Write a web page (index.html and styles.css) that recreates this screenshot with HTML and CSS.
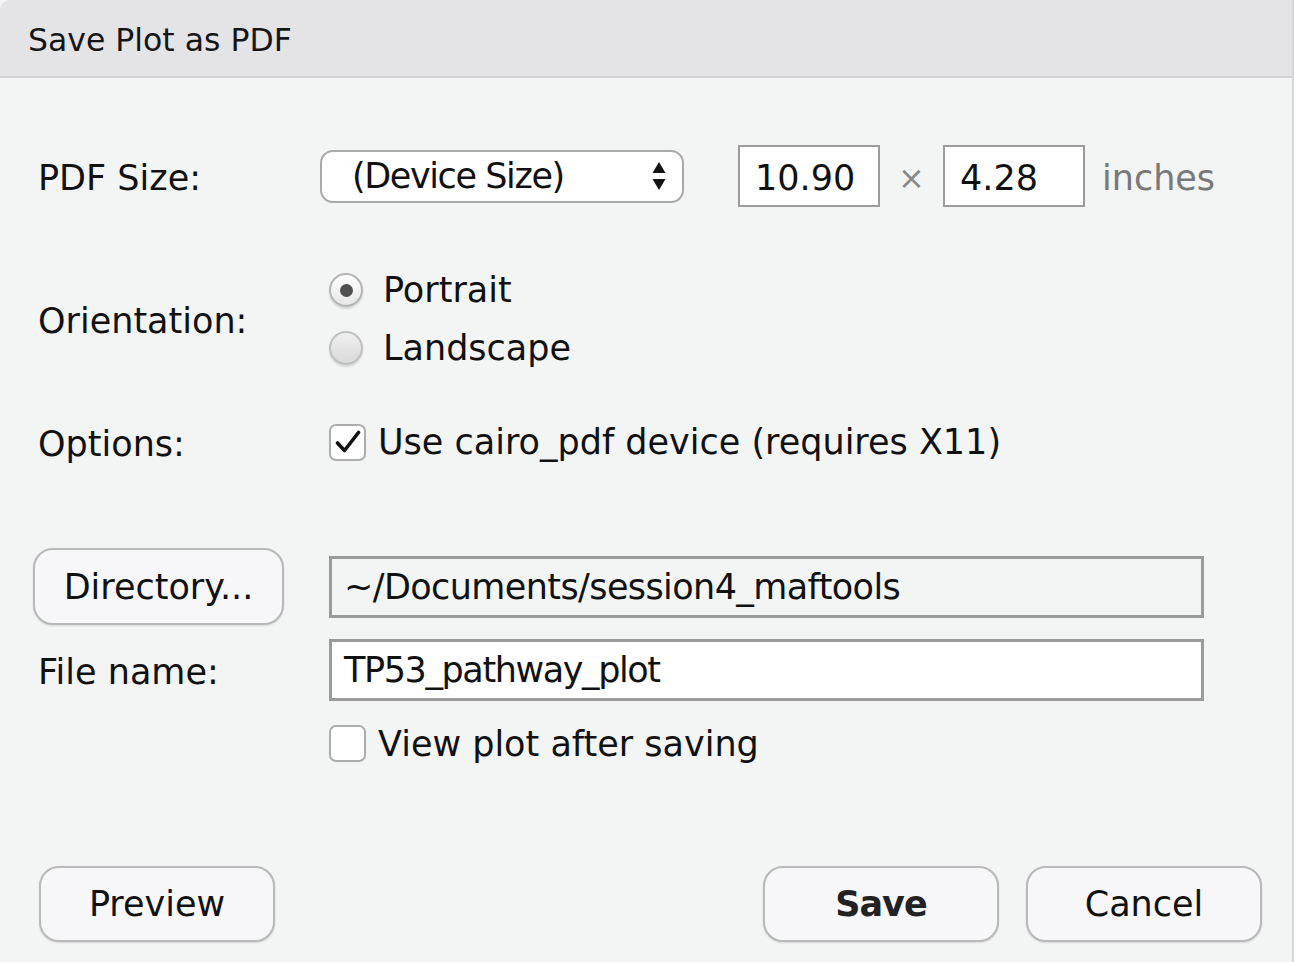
FILE: index.html
```html
<!DOCTYPE html>
<html>
<head>
<meta charset="utf-8">
<title>Save Plot as PDF</title>
<link rel="stylesheet" href="styles.css">
</head>
<body>
<div class="dialog">
  <div class="titlebar">Save Plot as PDF</div>
  <div class="content">
    <div class="row row-size">
      <div class="label">PDF Size:</div>
      <div class="select">
        <span class="select-text">(Device Size)</span>
        <svg class="arrows" width="14" height="30" viewBox="0 0 14 30"><path d="M7 1 L13.5 12 L0.5 12 Z M7 29 L13.5 18 L0.5 18 Z" fill="#111"/></svg>
      </div>
      <div class="input num">10.90</div>
      <span class="times">×</span>
      <div class="input num">4.28</div>
      <span class="unit">inches</span>
    </div>

    <div class="row row-orient">
      <div class="label">Orientation:</div>
      <div class="radios">
        <div class="radio-row"><span class="radio checked"></span><span class="opt">Portrait</span></div>
        <div class="radio-row"><span class="radio"></span><span class="opt">Landscape</span></div>
      </div>
    </div>

    <div class="row row-options">
      <div class="label">Options:</div>
      <span class="check on"><svg width="26" height="24" viewBox="0 0 26 24"><path d="M2.5 13 L9.5 20.5 L23.5 2.5" fill="none" stroke="#111" stroke-width="3.6" stroke-linecap="round" stroke-linejoin="round"/></svg></span>
      <span class="opt opt-check">Use cairo_pdf device (requires X11)</span>
    </div>

    <div class="row row-dir">
      <div class="label-btn"><button class="btn dir">Directory...</button></div>
      <div class="field readonly">~/Documents/session4_maftools</div>
    </div>

    <div class="row row-file">
      <div class="label">File name:</div>
      <div class="field file">TP53_pathway_plot</div>
    </div>

    <div class="row row-view">
      <div class="label"></div>
      <span class="check"></span>
      <span class="opt opt-check">View plot after saving</span>
    </div>
  </div>
  <div class="footer">
    <button class="btn preview">Preview</button>
    <div class="spacer"></div>
    <button class="btn save">Save</button>
    <button class="btn cancel">Cancel</button>
  </div>
</div>
</body>
</html>
```

FILE: styles.css
```css
html, body {
  margin: 0;
  padding: 0;
  background: #f3f4f4;
}
body {
  font-family: "DejaVu Sans", "Liberation Sans", sans-serif;
  color: #111;
  width: 1294px;
  height: 962px;
  overflow: hidden;
}
.dialog {
  width: 1294px;
  height: 962px;
  box-sizing: border-box;
  border-right: 2px solid #d8d8da;
}
.titlebar {
  height: 72px;
  padding-top: 4px;
  padding-left: 28px;
  line-height: 72px;
  font-size: 31.5px;
  background: #e4e4e7;
  border-bottom: 2px solid #d2d2d5;
  border-top-left-radius: 10px;
  color: #151515;
}
.content {
  padding-top: 67px;
  padding-left: 38px;
}
.row {
  display: flex;
  align-items: center;
  font-size: 35px;
}
.label {
  width: 282px;
  flex: none;
  padding-top: 3px;
}
.row-size {
  height: 62px;
}
.select {
  width: 364px;
  height: 53px;
  box-sizing: border-box;
  border: 2px solid #a9a9a9;
  border-radius: 13px;
  background: #fff;
  display: flex;
  align-items: center;
  padding-left: 30px;
  padding-right: 16px;
}
.select-text {
  flex: 1;
  letter-spacing: -1.4px;
}
.arrows {
  display: block;
}
.input {
  height: 62px;
  width: 142px;
  box-sizing: border-box;
  border: 2px solid #9c9c9c;
  background: #fff;
  display: flex;
  align-items: center;
  padding-left: 15px;
  padding-top: 3px;
}
.row-size .select + .input {
  margin-left: 54px;
}
.times {
  color: #8a8a8a;
  width: 63px;
  text-align: center;
  font-size: 32px;
  padding-top: 3px;
}
.unit {
  color: #787878;
  margin-left: 17px;
  padding-top: 3px;
}
.row-orient {
  margin-top: 54px;
  height: 116px;
}
.radios {
  display: flex;
  flex-direction: column;
  margin-left: 9px;
}
.radio-row {
  height: 58px;
  display: flex;
  align-items: center;
}
.radio {
  width: 34px;
  height: 34px;
  box-sizing: border-box;
  border-radius: 50%;
  border: 2px solid #b4b4b4;
  background: linear-gradient(#ffffff, #e6e6e6);
  box-shadow: 0 2px 2px rgba(0,0,0,0.12);
  display: flex;
  align-items: center;
  justify-content: center;
  margin-right: 20px;
}
.radio:not(.checked) {
  background: linear-gradient(#f0f0f0, #d9d9d9);
  border-color: #c0c0c0;
}
.radio.checked::after {
  content: "";
  width: 13px;
  height: 13px;
  border-radius: 50%;
  background: #505050;
}
.row-options {
  margin-top: 35px;
  height: 60px;
}
.check {
  width: 37px;
  height: 37px;
  box-sizing: border-box;
  border: 2px solid #acacac;
  border-radius: 7px;
  background: #fff;
  margin-left: 9px;
  margin-right: 12px;
  display: flex;
  align-items: center;
  justify-content: center;
  flex: none;
}
.check svg {
  display: block;
}
.row-dir {
  margin-top: 76px;
  height: 77px;
}
.label-btn {
  width: 296px;
  flex: none;
  margin-left: -5px;
}
.btn {
  font-family: "DejaVu Sans", "Liberation Sans", sans-serif;
  font-size: 35px;
  color: #111;
  background: #f7f7f9;
  border: 2px solid #b9b9b9;
  box-shadow: 0 1px 2px rgba(0,0,0,0.12);
  padding: 0;
  margin: 0;
}
.btn.dir {
  width: 251px;
  height: 77px;
  border-radius: 20px;
}
.field {
  width: 875px;
  height: 62px;
  box-sizing: border-box;
  border: 3px solid #9b9b9b;
  background: #fff;
  display: flex;
  align-items: center;
  padding-left: 12px;
}
.field.file {
  margin-left: 9px;
  letter-spacing: -1.4px;
}
.field.readonly {
  background: #f3f4f4;
  letter-spacing: -0.6px;
}
.row-file {
  margin-top: 14px;
  height: 62px;
}
.row-view {
  margin-top: 24px;
  height: 37px;
}
.footer {
  display: flex;
  margin-top: 104px;
  padding-left: 39px;
  padding-right: 30px;
}
.spacer {
  flex: 1;
}
.footer .btn {
  width: 236px;
  height: 76px;
  border-radius: 20px;
}
.footer .btn.save {
  font-weight: bold;
  color: #222;
  margin-right: 27px;
  letter-spacing: -1px;
}
```
